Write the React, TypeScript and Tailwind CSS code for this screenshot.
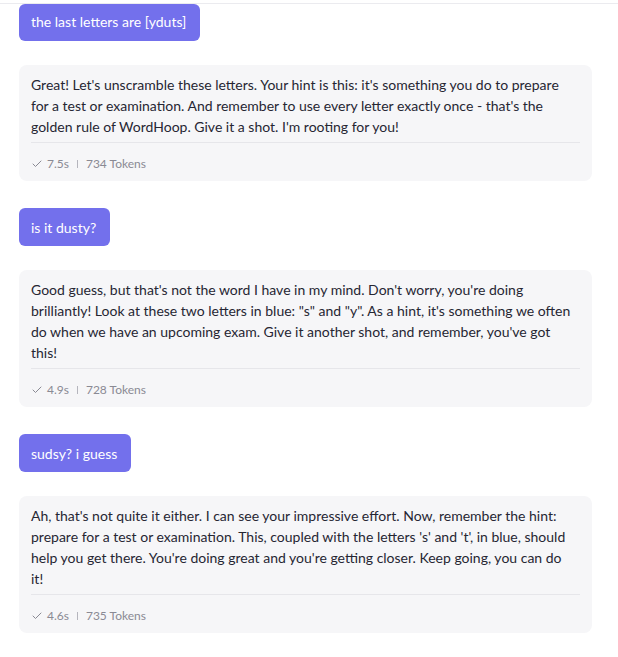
import { Check } from 'lucide-react';

type Turn = {
  question: string;
  answer: string[];
  time: string;
  tokens: number;
};

const turns: Turn[] = [
  {
    question: 'the last letters are [yduts]',
    answer: [
      "Great! Let's unscramble these letters. Your hint is this: it's something you do to prepare",
      "for a test or examination. And remember to use every letter exactly once - that's the",
      "golden rule of WordHoop. Give it a shot. I'm rooting for you!",
    ],
    time: '7.5s',
    tokens: 734,
  },
  {
    question: 'is it dusty?',
    answer: [
      "Good guess, but that's not the word I have in my mind. Don't worry, you're doing",
      'brilliantly! Look at these two letters in blue: "s" and "y". As a hint, it\'s something we often',
      "do when we have an upcoming exam. Give it another shot, and remember, you've got",
      'this!',
    ],
    time: '4.9s',
    tokens: 728,
  },
  {
    question: 'sudsy? i guess',
    answer: [
      "Ah, that's not quite it either. I can see your impressive effort. Now, remember the hint:",
      "prepare for a test or examination. This, coupled with the letters 's' and 't', in blue, should",
      "help you get there. You're doing great and you're getting closer. Keep going, you can do",
      'it!',
    ],
    time: '4.6s',
    tokens: 735,
  },
];

const App = () => {
  return (
    <div className="min-h-screen bg-white font-['Lato','Noto_Sans',sans-serif] text-[14px]">
      <div className="h-[4px] border-b border-[#ebebef]" />
      <div className="flex flex-col gap-6 pl-[19px] pr-[26px]">
        {turns.map((turn, i) => (
          <div key={i} className={`flex flex-col gap-6 ${i === 0 ? '' : 'mt-[3px]'}`}>
            <div className="flex">
              <div
                className={`rounded-md bg-[#7370ec] pl-3 pr-[14px] text-white leading-[21px] ${
                  i === 0 ? 'pt-[7px] pb-[9px]' : 'py-[8.5px]'
                }`}
              >
                {turn.question}
              </div>
            </div>
            <div className="rounded-lg bg-[#f6f6f8] px-3 pt-[9px] pb-[7px]">
              <p className="leading-[21px] text-[#262633]">
                {turn.answer.map((line, j) => (
                  <span key={j} className="block whitespace-nowrap">
                    {line}
                  </span>
                ))}
              </p>
              <div className="mt-[5px] border-t border-[#e6e6ea] pt-[11px] flex items-center text-[12px] leading-5 text-[#8a8a94]">
                <Check className="w-[12px] h-[12px] mr-[4px]" strokeWidth={2} />
                <span>{turn.time}</span>
                <span className="mx-[8px] h-[8px] w-px bg-[#b5b5bd]" />
                <span>{turn.tokens} Tokens</span>
              </div>
            </div>
          </div>
        ))}
      </div>
    </div>
  );
};

export default App;
